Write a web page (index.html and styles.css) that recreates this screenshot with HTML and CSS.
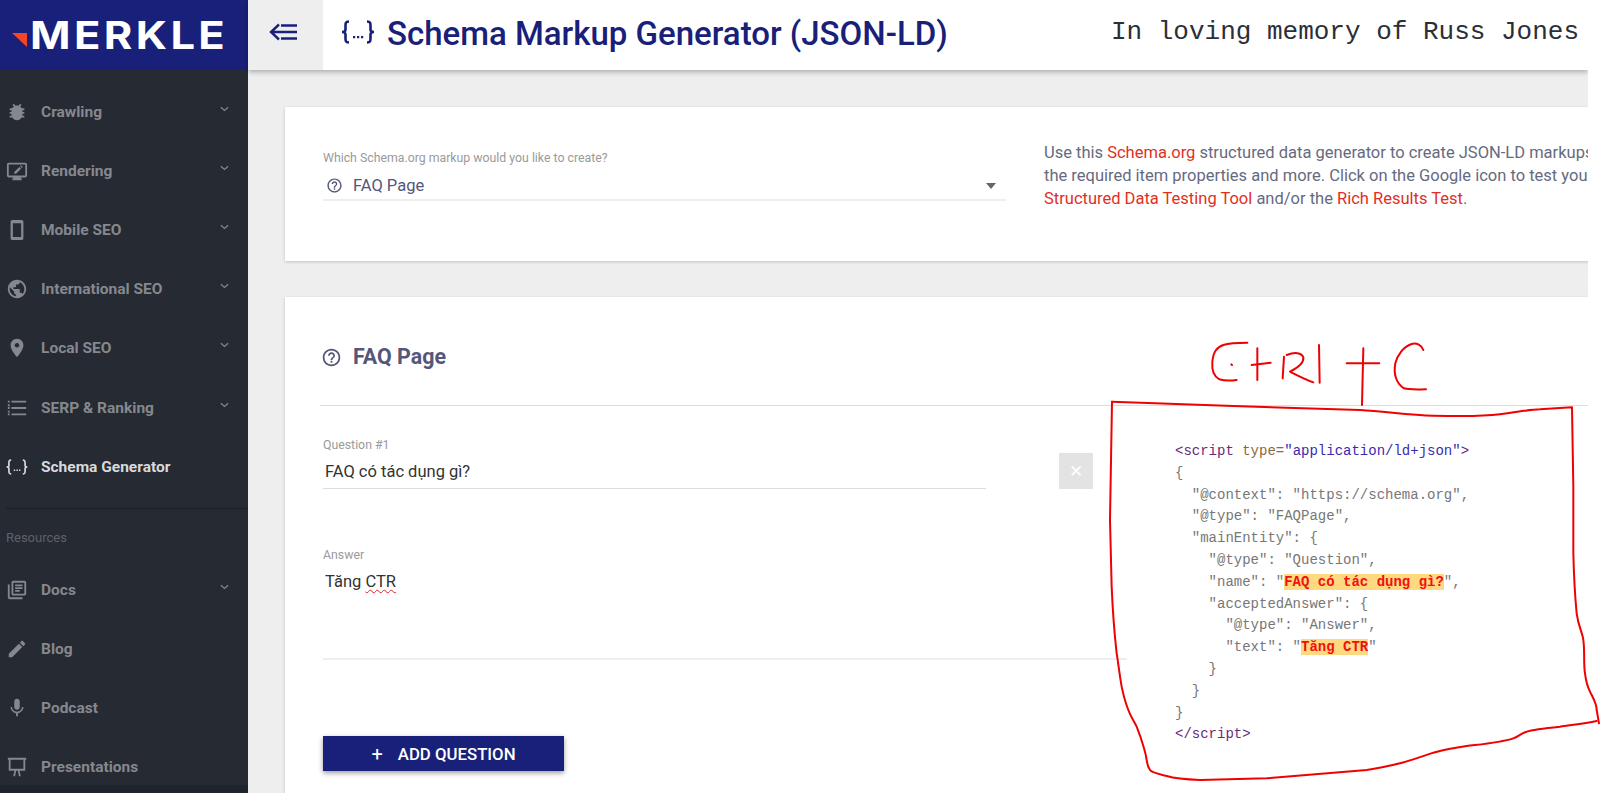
FILE: index.html
```html
<!DOCTYPE html>
<html lang="en">
<head>
<meta charset="utf-8">
<title>Schema Markup Generator (JSON-LD)</title>
<link rel="stylesheet" href="styles.css">
</head>
<body>
<svg class="defs" width="0" height="0" aria-hidden="true">
  <defs>
    <symbol id="i-bug" viewBox="0 0 24 24"><path d="M20 8h-2.810c-.45-.78-1.070-1.450-1.820-1.960L17 4.410 15.590 3l-2.170 2.170C12.960 5.060 12.490 5 12 5c-.49 0-.96.06-1.410.17L8.410 3 7 4.410l1.620 1.630C7.880 6.550 7.260 7.220 6.810 8H4v2h2.090c-.05.33-.09.66-.09 1v1H4v2h2v1c0 .34.04.67.09 1H4v2h2.810c1.040 1.790 2.970 3 5.190 3s4.150-1.210 5.190-3H20v-2h-2.090c.05-.33.09-.66.09-1v-1h2v-2h-2v-1c0-.34-.04-.67-.09-1H20V8z"/></symbol>
    <symbol id="i-monitor" viewBox="0 0 24 24"><path d="M21 3H3c-1.100 0-2 .9-2 2v12c0 1.100.9 2 2 2h5v1H7v2h10v-2h-1v-1h5c1.100 0 2-.9 2-2V5c0-1.100-.9-2-2-2zm0 14H3V5h18v12z"/><path d="M9 13v2h2l5.500-5.500-2-2zM15.300 6.700l2 2 1-1-2-2z"/></symbol>
    <symbol id="i-phone" viewBox="0 0 24 24"><path d="M17 1H7c-1.100 0-2 .9-2 2v18c0 1.100.9 2 2 2h10c1.100 0 2-.9 2-2V3c0-1.100-.9-2-2-2zm-.5 18.500h-9v-15h9z"/></symbol>
    <symbol id="i-globe" viewBox="0 0 24 24"><path d="M12 2C6.480 2 2 6.480 2 12s4.480 10 10 10 10-4.480 10-10S17.520 2 12 2zm-1 17.930c-3.950-.49-7-3.850-7-7.930 0-.62.08-1.210.21-1.790L9 15v1c0 1.100.9 2 2 2v1.930zm6.900-2.540c-.26-.81-1-1.390-1.900-1.390h-1v-3c0-.55-.45-1-1-1H8v-2h2c.55 0 1-.45 1-1V7h2c1.100 0 2-.9 2-2v-.41c2.930 1.190 5 4.060 5 7.410 0 2.080-.8 3.970-2.100 5.390z"/></symbol>
    <symbol id="i-pin" viewBox="0 0 24 24"><path d="M12 2C8.130 2 5 5.130 5 9c0 5.250 7 13 7 13s7-7.750 7-13c0-3.870-3.130-7-7-7zm0 9.500c-1.380 0-2.500-1.120-2.500-2.500s1.120-2.500 2.500-2.500 2.500 1.120 2.500 2.500-1.120 2.500-2.500 2.500z"/></symbol>
    <symbol id="i-list" viewBox="0 0 24 24"><path d="M2 4h2v2H2zM2 8h2v2H2zM2 11h2v2H2zM2 15h2v2H2zM2 18h2v2H2zM6 4h16v2H6zM6 11h16v2H6zM6 18h16v2H6z"/></symbol>
    <symbol id="i-docs" viewBox="0 0 24 24"><path d="M4 6H2v14c0 1.100.9 2 2 2h14v-2H4V6zm16-4H8c-1.100 0-2 .9-2 2v12c0 1.100.9 2 2 2h12c1.100 0 2-.9 2-2V4c0-1.100-.9-2-2-2zm0 14H8V4h12v12zM10 6h8v2h-8zM10 9h8v2h-8zM10 12h5v2h-5z"/></symbol>
    <symbol id="i-pen" viewBox="0 0 24 24"><path d="M3 17.250V21h3.750L17.810 9.940l-3.750-3.750L3 17.250zM20.710 7.040c.39-.39.39-1.020 0-1.410l-2.340-2.340c-.39-.39-1.020-.39-1.410 0l-1.830 1.830 3.750 3.750 1.830-1.830z"/></symbol>
    <symbol id="i-mic" viewBox="0 0 24 24"><path d="M12 14c1.660 0 3-1.340 3-3V5c0-1.660-1.340-3-3-3S9 3.340 9 5v6c0 1.660 1.340 3 3 3zm5.300-3c0 3-2.540 5.100-5.300 5.100S6.700 14 6.700 11H5c0 3.410 2.720 6.230 6 6.720V21h2v-3.280c3.280-.48 6-3.300 6-6.720h-1.700z"/></symbol>
    <symbol id="i-easel" viewBox="0 0 24 24"><path d="M2 2h20v2h-1v12h-6.200l1.300 6h-2l-1.200-6h-1.800l-1.200 6h-2l1.300-6H3V4H2zm3 2v10h14V4z"/></symbol>
    <symbol id="i-help" viewBox="0 0 24 24"><path d="M11 18h2v-2h-2v2zm1-16C6.480 2 2 6.480 2 12s4.480 10 10 10 10-4.480 10-10S17.520 2 12 2zm0 18c-4.410 0-8-3.590-8-8s3.590-8 8-8 8 3.590 8 8-3.590 8-8 8zm0-14c-2.210 0-4 1.790-4 4h2c0-1.100.9-2 2-2s2 .9 2 2c0 2-3 1.750-3 5h2c0-2.250 3-2.500 3-5 0-2.210-1.790-4-4-4z"/></symbol>
    <symbol id="i-braces" viewBox="0 0 34 24"><path fill="none" stroke="currentColor" stroke-width="2.600" d="M8 1.500C4.500 1.500 4.500 3 4.500 6v3.500C4.500 11 3.500 12 1 12c2.500 0 3.500 1 3.500 2.500V18c0 3 0 4.500 3.500 4.500M26 1.500c3.500 0 3.500 1.500 3.500 4.500v3.500c0 1.500 1 2.500 3.500 2.500-2.500 0-3.500 1-3.500 2.500V18c0 3 0 4.500-3.500 4.500"/><path d="M12 16h2.200v2.200H12zM16 16h2.200v2.200H16zM20 16h2.200v2.200H20z"/></symbol>
    <symbol id="i-chevron" viewBox="0 0 10 6"><path fill="none" stroke="currentColor" stroke-width="1.300" d="M1 1l4 3.500L9 1"/></symbol>
  </defs>
</svg>

<div class="app">
  <aside class="sidebar">
    <div class="brand">
      <svg class="brand-mark" viewBox="0 0 15 15" aria-hidden="true"><path d="M0 1h15v14z"/></svg>
      <span class="brand-name">MERKLE</span>
    </div>
    <nav class="nav">
      <a class="nav-item"><svg class="nav-icon"><use href="#i-bug"/></svg><span class="nav-label">Crawling</span><svg class="chevron"><use href="#i-chevron"/></svg></a>
      <a class="nav-item"><svg class="nav-icon"><use href="#i-monitor"/></svg><span class="nav-label">Rendering</span><svg class="chevron"><use href="#i-chevron"/></svg></a>
      <a class="nav-item"><svg class="nav-icon"><use href="#i-phone"/></svg><span class="nav-label">Mobile SEO</span><svg class="chevron"><use href="#i-chevron"/></svg></a>
      <a class="nav-item"><svg class="nav-icon"><use href="#i-globe"/></svg><span class="nav-label">International SEO</span><svg class="chevron"><use href="#i-chevron"/></svg></a>
      <a class="nav-item"><svg class="nav-icon"><use href="#i-pin"/></svg><span class="nav-label">Local SEO</span><svg class="chevron"><use href="#i-chevron"/></svg></a>
      <a class="nav-item"><svg class="nav-icon"><use href="#i-list"/></svg><span class="nav-label">SERP &amp; Ranking</span><svg class="chevron"><use href="#i-chevron"/></svg></a>
      <a class="nav-item active"><svg class="nav-icon"><use href="#i-braces"/></svg><span class="nav-label">Schema Generator</span></a>
    </nav>
    <div class="nav-divider"></div>
    <div class="nav-heading">Resources</div>
    <nav class="nav">
      <a class="nav-item"><svg class="nav-icon"><use href="#i-docs"/></svg><span class="nav-label">Docs</span><svg class="chevron"><use href="#i-chevron"/></svg></a>
      <a class="nav-item"><svg class="nav-icon"><use href="#i-pen"/></svg><span class="nav-label">Blog</span></a>
      <a class="nav-item"><svg class="nav-icon"><use href="#i-mic"/></svg><span class="nav-label">Podcast</span></a>
      <a class="nav-item"><svg class="nav-icon"><use href="#i-easel"/></svg><span class="nav-label">Presentations</span></a>
    </nav>
  </aside>

  <div class="content">
    <header class="topbar">
      <button class="toggle" aria-label="Collapse menu">
        <svg viewBox="0 0 28 18" width="28" height="18" aria-hidden="true"><path fill="none" stroke="currentColor" stroke-width="2.400" d="M10 1.500L2 9l8 7.500M2 9h26M12 2.500h16M12 15.500h16"/></svg>
      </button>
      <svg class="title-icon"><use href="#i-braces"/></svg>
      <h1 class="title">Schema Markup Generator (JSON-LD)</h1>
      <div class="memory">In loving memory of Russ Jones</div>
    </header>

    <main class="main">
      <section class="card card-intro">
        <div class="select-field">
          <div class="field-label">Which Schema.org markup would you like to create?</div>
          <div class="select-value">
            <svg class="help-icon"><use href="#i-help"/></svg>
            <span>FAQ Page</span>
            <span class="caret"></span>
          </div>
        </div>
        <div class="intro-text">
          <p>Use this <a>Schema.org</a> structured data generator to create JSON-LD markups</p>
          <p>the required item properties and more. Click on the Google icon to test your</p>
          <p><a>Structured Data Testing Tool</a> and/or the <a>Rich Results Test</a>.</p>
        </div>
      </section>

      <section class="card card-form">
        <h2 class="form-title"><svg class="form-help"><use href="#i-help"/></svg>FAQ Page</h2>
        <hr class="form-rule">
        <div class="question-row">
          <div class="field question-field">
            <div class="field-label">Question #1</div>
            <div class="field-value">FAQ có tác dụng gì?</div>
          </div>
          <button class="remove" aria-label="Remove question">✕</button>
        </div>
        <div class="field answer-field">
          <div class="field-label">Answer</div>
          <div class="field-value answer-value">Tăng <span class="misspelt">CTR</span></div>
        </div>
        <button class="add-btn"><span class="add-plus">+</span>ADD QUESTION</button>
      </section>
    </main>
  </div>
</div>

<div class="paste">
  <div class="code">
    <div class="code-line"><span class="tag">&lt;script</span> <span class="attr">type=</span><span class="str">"application/ld+json"</span><span class="tag">&gt;</span></div>
    <div class="code-line">{</div>
    <div class="code-line">  "@context": "https://schema.org",</div>
    <div class="code-line">  "@type": "FAQPage",</div>
    <div class="code-line">  "mainEntity": {</div>
    <div class="code-line">    "@type": "Question",</div>
    <div class="code-line">    "name": "<mark class="hl">FAQ có tác dụng gì?</mark>",</div>
    <div class="code-line">    "acceptedAnswer": {</div>
    <div class="code-line">      "@type": "Answer",</div>
    <div class="code-line">      "text": "<mark class="hl">Tăng CTR</mark>"</div>
    <div class="code-line">    }</div>
    <div class="code-line">  }</div>
    <div class="code-line">}</div>
    <div class="code-line"><span class="tag">&lt;/script&gt;</span></div>
  </div>
</div>

<svg class="scribble" viewBox="0 0 1500 1419" aria-hidden="true">
  <path d="M36 245L400 258L780 270C860 275 930 285 1000 287C1100 290 1160 288 1200 283C1250 277 1290 268 1320 268L1416 262L1420 500L1420 700C1422 780 1425 830 1430 880C1435 920 1448 940 1450 960C1455 1000 1450 1030 1455 1060C1458 1085 1465 1105 1470 1115C1480 1135 1490 1150 1490 1170L1497 1210"/>
  <path d="M1490 1203C1450 1212 1410 1215 1380 1220C1340 1224 1300 1228 1280 1235C1262 1240 1255 1250 1240 1255C1200 1268 1150 1272 1100 1278C1060 1284 1030 1290 1000 1298C960 1312 930 1322 900 1330C860 1340 830 1346 800 1350L500 1375L300 1380C250 1378 220 1374 200 1368C175 1362 155 1358 150 1350C142 1340 142 1330 140 1320C138 1305 135 1295 132 1285C125 1260 118 1240 110 1220C100 1200 92 1190 85 1170C75 1145 70 1125 65 1100C58 1060 55 1030 50 1000C42 930 38 870 35 800L30 600L36 245"/>
  <path d="M442 68C410 68 385 70 370 75C350 82 340 95 337 125C335 150 342 170 358 178C375 183 395 182 410 180M394 133L396 135"/>
  <path d="M455 135L512 128M472 85L472 180"/>
  <path d="M552 110L548 175M560 105C585 95 605 98 610 112C612 130 590 145 570 155C590 165 615 178 640 187M657 75L659 188"/>
  <path d="M740 130L838 130M790 85L786 255"/>
  <path d="M970 90C965 75 950 68 935 72C910 80 892 105 886 130C880 160 888 190 912 205C930 210 955 208 978 208"/>
</svg>
</body>
</html>
```
FILE: styles.css
```css
* { box-sizing: border-box; }
html, body { margin: 0; height: 793px; overflow: hidden; background: #fff; }
body { font-family: Roboto, "Noto Sans", sans-serif; position: relative; }
.defs { position: absolute; }
h1, h2, p { margin: 0; }
a { color: inherit; }
button { font-family: inherit; border: 0; padding: 0; }

.app { display: flex; width: 1588px; height: 793px; overflow: hidden; }

.sidebar { flex: 0 0 248px; background: #252a33; color: #85888e; box-shadow: inset 0 -8px 0 #1f232b; }
.brand { height: 70px; background: #182079; display: flex; align-items: center; padding-left: 12px; }
.brand-mark { width: 15px; height: 15px; fill: #f2452a; margin-top: 8px; flex: none; }
.brand-name { color: #fff; font: 700 38.500px/1 Inter, sans-serif; letter-spacing: 3px; margin-left: 3px; transform: scaleX(1.13); transform-origin: left center; }

.nav:first-of-type { padding-top: 12px; }
.nav-item { display: flex; align-items: center; height: 59.200px; padding-left: 6px; font-size: 15.500px; font-weight: 700; }
.nav-item.active { color: #d8d9db; }
.nav-icon { width: 22px; height: 22px; fill: currentColor; color: inherit; flex: none; }
.nav-label { margin-left: 13px; flex: 1; }
.chevron { width: 9px; height: 6px; margin: 0 19px 6px 0; color: #85888e; flex: none; }
.nav-divider { height: 1px; background: #1b1e25; margin: 12px 0 0 6px; }
.nav-heading { font-size: 13px; color: #5e6167; padding: 21px 0 14px 6px; line-height: 16px; }
.nav-heading + .nav { padding-top: 0; }

.content { flex: 1; min-width: 0; display: flex; flex-direction: column; background: #eee; }
.topbar { flex: 0 0 70px; display: flex; align-items: center; background: #fff; box-shadow: 0 2px 5px rgba(0,0,0,.28); position: relative; z-index: 1; }
.toggle { flex: 0 0 75px; height: 70px; padding: 0 5px 6px 0; background: #eee; color: #182079; display: flex; align-items: center; justify-content: center; }
.title-icon { width: 34px; height: 24px; margin: 0 0 6px 18px; fill: #182079; color: #182079; flex: none; }
.title { font-size: 33px; font-weight: 500; color: #182079; margin: 0 0 4px 12px; white-space: nowrap; }
.memory { font: 400 26px/1 "Liberation Mono", monospace; color: #2a2f3a; margin: 0 9px 6px auto; white-space: nowrap; }

.main { flex: 1; padding: 37px 0 0 37px; overflow: hidden; }
.card { background: #fff; box-shadow: 0 1px 3px rgba(0,0,0,.18); width: 1400px; }
.card-intro { height: 154px; display: flex; padding: 44px 0 0 38px; }
.select-field { flex: 0 0 683px; }
.field-label { font-size: 12.300px; line-height: 14px; color: #9a9a9a; }
.select-value { display: flex; align-items: center; height: 36px; border-bottom: 2px solid #eee; padding: 7px 0 0 3px; color: #54567a; font-size: 16.500px; }
.help-icon { width: 17px; height: 17px; fill: #54567a; margin-right: 10px; flex: none; }
.caret { margin-left: auto; margin-right: 10px; width: 0; height: 0; border: 5px solid transparent; border-top: 6px solid #666; border-bottom: 0; }
.intro-text { margin: -10px 0 0 38px; font-size: 16.500px; line-height: 23px; font-weight: 400; color: #666a80; white-space: nowrap; }
.intro-text a { color: #e0301e; }

.card-form { margin-top: 36px; height: 520px; padding: 46px 0 0 38px; }
.form-title { display: flex; align-items: center; font-size: 21.400px; font-weight: 700; color: #54567a; line-height: 28px; margin: 0 0 34px -2px; }
.form-help { width: 21px; height: 21px; fill: #54567a; margin-right: 11px; }
.form-rule { border: 0; height: 1px; background: #ddd; margin: 0 0 32px -3px; width: 1272px; }
.question-row { display: flex; align-items: flex-start; }
.field-value { font-size: 16.500px; color: #333; padding-left: 2px; }
.question-field { flex: 0 0 663px; height: 51px; border-bottom: 1px solid #ddd; }
.question-field .field-value { line-height: 30px; margin-top: 5px; }
.remove { width: 34px; height: 36px; background: #e3e3e3; color: #fff; font-size: 17px; margin: 15px 0 0 73px; }
.answer-field { margin-top: 59px; width: 804px; height: 112px; border-bottom: 2px solid #eee; }
.answer-value { margin-top: 7px; line-height: 26px; }
.misspelt { text-decoration: underline wavy #e02020 1px; text-underline-offset: 2px; }
.add-btn { display: flex; align-items: center; justify-content: center; width: 241px; height: 35px; margin-top: 76px; background: #182079; color: #fff; font-size: 16.800px; font-weight: 500; box-shadow: 0 2px 5px rgba(0,0,0,.4); }
.add-plus { font-size: 20px; font-weight: 400; margin-right: 15px; line-height: 1; }

.paste { position: absolute; left: 1127px; top: 410px; width: 461px; height: 360px; background: #fff; padding: 31px 0 0 48px; }
.code { font: 14px/21.800px "Liberation Mono", monospace; color: #777; }
.code-line { white-space: pre; height: 21.800px; }
.tag { color: #6a2a7a; }
.attr { color: #8a6a3a; }
.str { color: #3a2ab0; }
.hl { background: #ffd97f; color: #f01010; font-weight: 700; }

.scribble { position: absolute; left: 1100px; top: 320px; width: 500px; height: 473px; }
.scribble path { fill: none; stroke: #f00000; stroke-width: 6; stroke-linejoin: round; stroke-linecap: round; }
```
